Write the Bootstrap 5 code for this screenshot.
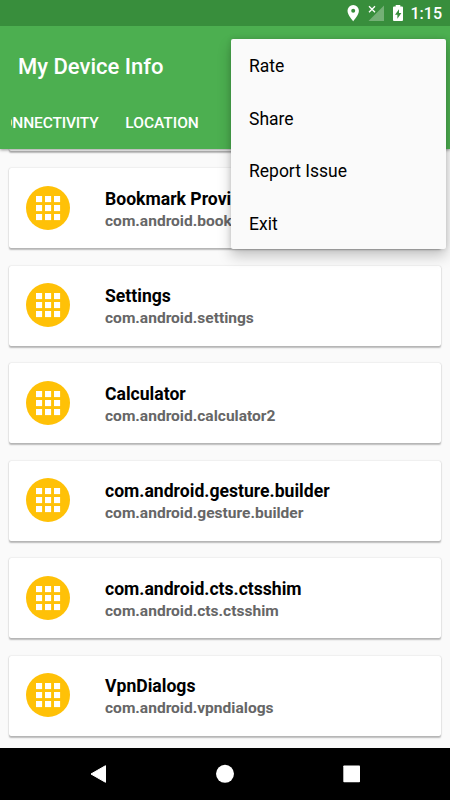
<!DOCTYPE html>
<html lang="en">
<head>
<meta charset="utf-8">
<meta name="viewport" content="width=device-width, initial-scale=1">
<title>My Device Info</title>
<link rel="stylesheet" href="https://cdn.jsdelivr.net/npm/bootstrap@5.3.0/dist/css/bootstrap.min.css">
<style>
body{font-family:Roboto,"Liberation Sans",sans-serif;background:#fafafa}
.screen{width:450px;height:800px}
.status{height:26px;background:#388e3c;font-size:16px;font-weight:500;line-height:26px;padding-right:8px;z-index:3}
.clock{padding-top:2px}
.appbar{height:123px;background:#4caf50;box-shadow:0 1px 3px rgba(0,0,0,.4);z-index:2}
.apptitle{font-size:22px;font-weight:500;line-height:26px;padding:28px 0 0 18px}
.tabs{height:52px;font-size:15.5px;font-weight:500;line-height:52px;margin:17px 0 0 11px;gap:26.8px}
.tabs span:first-child{margin-left:-9.2px;letter-spacing:-.15px}
.applist{min-height:0;gap:17.5px;padding:0 9px 12.5px}
.app{height:80px;border:0;border-radius:2px;box-shadow:0 1.5px 1.5px rgba(0,0,0,.25),0 0 1.5px rgba(0,0,0,.2);padding:0 17px}
.app svg{margin:-1px 35px 0 0}
.app-name{font-size:17.6px;font-weight:700;line-height:22px;color:#000;padding-top:3px}
.app-id{font-size:15.55px;font-weight:700;line-height:22px;color:#666}
.navkeys{height:52px;background:#000}
.overflow-menu{left:231px;top:39px;width:215px;height:210px;background:#fafafa;border-radius:2px;z-index:5;box-shadow:0 7px 14px rgba(0,0,0,.22),0 0 5px rgba(0,0,0,.15)}
.overflow-menu div{height:52.5px;line-height:55px;padding-left:18px;font-size:17.5px;color:#000}
</style>
</head>
<body>
<div class="screen position-relative overflow-hidden d-flex flex-column">
  <div class="status flex-shrink-0 position-relative d-flex align-items-center justify-content-end text-white">
    <svg width="66" height="26" viewBox="0 0 66 26">
      <path fill="#fff" fill-rule="evenodd" d="M8.200 5a5.700 5.700 0 0 0-5.700 5.800C2.500 15 8.200 21.200 8.200 21.200S13.900 15 13.900 10.800A5.700 5.700 0 0 0 8.200 5zm0 3.700a2 2 0 1 1 0 4 2 2 0 0 1 0-4z"/>
      <path fill="#fff" fill-opacity=".3" d="M39 5.500V21H23.500z"/>
      <path stroke="#fff" stroke-width="1.300" d="M24 6.200l6 6M30 6.200l-6 6"/>
      <path fill="#fff" fill-rule="evenodd" d="M50.700 5h4.600v1.600H57q1 0 1 1V20q0 1-1 1h-8q-1 0-1-1V7.600q0-1 1-1h1.700zM54 9.200l-4 5.600h2.400v4l4-5.800H54z"/>
    </svg>
    <span class="clock">1:15</span>
  </div>
  <header class="appbar flex-shrink-0 position-relative text-white">
    <div class="apptitle">My Device Info</div>
    <div class="tabs d-flex overflow-hidden text-nowrap"><span>ONNECTIVITY</span><span>LOCATION</span></div>
  </header>
  <main class="applist flex-grow-1 overflow-hidden d-flex flex-column justify-content-end" id="apps"></main>
  <nav class="navkeys flex-shrink-0">
    <svg width="450" height="52" viewBox="0 0 450 52" fill="#fff">
      <path stroke="#fff" stroke-linejoin="round" d="M105.500 17.700v16.600L91 26z"/>
      <circle cx="225" cy="25.800" r="9"/>
      <rect x="343.300" y="17.500" width="16.700" height="16.700" rx=".8"/>
    </svg>
  </nav>
  <div class="overflow-menu position-absolute">
    <div>Rate</div><div>Share</div><div>Report Issue</div><div>Exit</div>
  </div>
</div>
<script src="https://cdn.jsdelivr.net/npm/bootstrap@5.3.0/dist/js/bootstrap.bundle.min.js"></script>
<script>
const apps=[["",""],["Bookmark Provider","com.android.bookmarkprovider"],["Settings","com.android.settings"],["Calculator","com.android.calculator2"],["com.android.gesture.builder","com.android.gesture.builder"],["com.android.cts.ctsshim","com.android.cts.ctsshim"],["VpnDialogs","com.android.vpndialogs"]];
const cells=[10,19,28].map(y=>[10,19,28].map(x=>`<rect x="${x}" y="${y}" width="6.100" height="6.100"/>`).join("")).join("");
document.getElementById("apps").innerHTML=apps.map(([name,id])=>`<div class="card app flex-row align-items-center flex-shrink-0"><svg width="44" height="44" viewBox="0 0 44 44" fill="#fff"><circle cx="22" cy="22" r="22" fill="#ffc107"/>${cells}</svg><div><div class="app-name">${name}</div><div class="app-id">${id}</div></div></div>`).join("");
</script>
</body>
</html>
